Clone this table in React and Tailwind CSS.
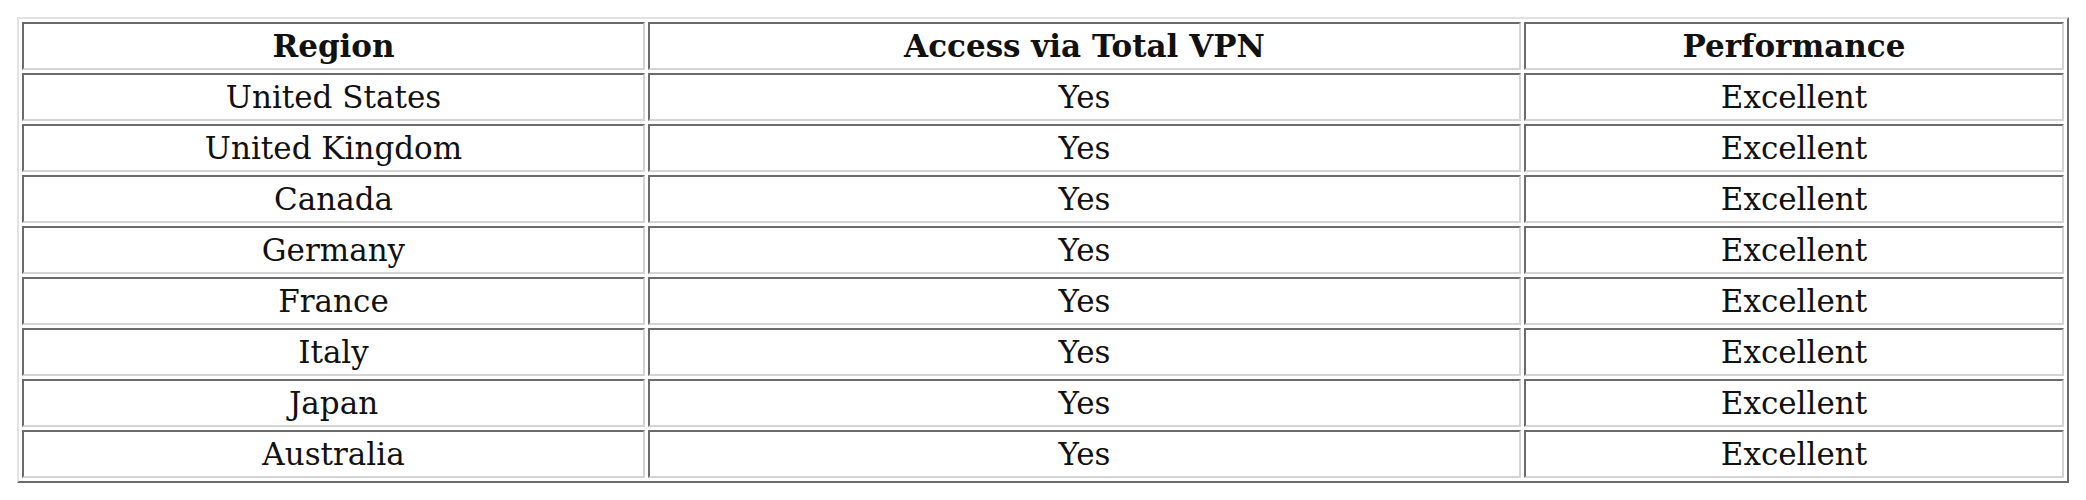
const rows = [
  'United States',
  'United Kingdom',
  'Canada',
  'Germany',
  'France',
  'Italy',
  'Japan',
  'Australia',
];

const cell =
  'border-2 border-t-[#6b6b6b] border-l-[#6b6b6b] border-b-[#d4d4d4] border-r-[#d4d4d4] h-[48px] p-0 leading-[36px] text-center align-middle';

export default function App() {
  return (
    <div className="min-h-[500px] bg-white p-[17px] font-['DejaVu_Serif',serif] text-[31px] text-[#111]">
      <table className="w-full border-separate border-spacing-[3px] border-2 border-t-[#e2e2e2] border-l-[#e2e2e2] border-b-[#6b6b6b] border-r-[#6b6b6b]">
        <thead>
          <tr>
            <th className={`${cell} w-[623px] font-bold`}>Region</th>
            <th className={`${cell} w-[873px] font-bold`}>Access via Total VPN</th>
            <th className={`${cell} font-bold`}>Performance</th>
          </tr>
        </thead>
        <tbody>
          {rows.map((r) => (
            <tr key={r}>
              <td className={cell}>{r}</td>
              <td className={cell}>Yes</td>
              <td className={cell}>Excellent</td>
            </tr>
          ))}
        </tbody>
      </table>
    </div>
  );
}
